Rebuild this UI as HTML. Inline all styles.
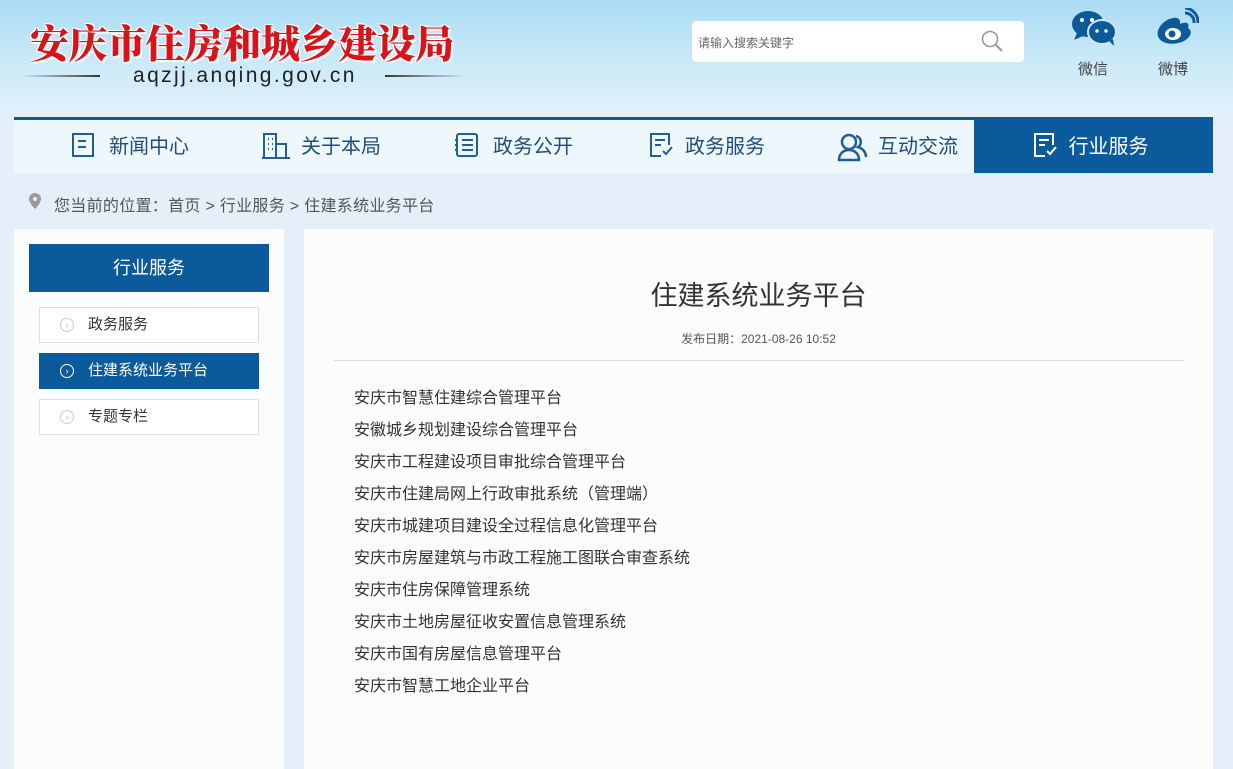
<!DOCTYPE html>
<html><head><meta charset="utf-8"><style>
*{margin:0;padding:0;box-sizing:border-box}
body{width:1233px;height:765px;overflow:hidden;font-family:"Liberation Sans","Noto Sans CJK SC",sans-serif;background:#e4eff9;position:relative;color:#333}
.hdr{position:absolute;left:0;top:0;width:1233px;height:117px;background:linear-gradient(180deg,#a9dcf5 0%,#c9e9f8 50%,#e3f1fa 100%)}
.logo{position:absolute;left:30px;top:14px;font-family:"Noto Serif CJK SC",serif;font-weight:900;font-size:39px;color:#d8141a;letter-spacing:-0.5px;text-shadow:2px 2px 0 #fff,-1px -1px 0 #fff,1px -1px 0 #fff,-1px 1px 0 #fff}
.url{position:absolute;left:133px;top:64px;font-size:21px;letter-spacing:2.4px;color:#222}
.ln{position:absolute;top:75px;height:2px;width:80px}
.search{position:absolute;left:692px;top:21px;width:332px;height:41px;background:#fff;border-radius:4px}
.search span{position:absolute;left:6px;top:13px;font-size:12px;color:#666}
.soc{position:absolute;top:58px;font-size:15px;color:#444}
.nav{position:absolute;left:14px;top:117px;width:1199px;height:56px;background:#edf7fc;border-top:3px solid #0d5a96}
.nav div{position:absolute;top:0;height:53px;line-height:55px;font-size:20px;color:#1f4e79}
.nav .act{left:960px;width:239px;background:#0b5a9b;color:#fff;text-align:center}
.nav svg{position:absolute;top:12px}
.crumb{position:absolute;left:54px;top:192px;font-size:16px;letter-spacing:0.3px;color:#555}
.side{position:absolute;left:14px;top:229px;width:270px;height:540px;background:#fbfcfd}
.sh{position:absolute;left:15px;top:15px;width:240px;height:48px;background:#0b5a9b;color:#fff;font-size:18px;text-align:center;line-height:48px}
.si{position:absolute;left:25px;width:220px;height:36px;border:1px solid #ddd;background:#fff;font-size:15px;line-height:34px;padding-left:48px;color:#333}
.si i{position:absolute;left:20px;top:10px;width:14px;height:14px;border:1px solid #ccc;border-radius:50%;font-style:normal;font-size:9px;line-height:12px;text-align:center;color:#bbb;padding:0}
.si.on{background:#0b5a9b;color:#fff;border-color:#0b5a9b}
.si.on i{border-color:#fff;color:#fff}
.main{position:absolute;left:304px;top:229px;width:909px;height:540px;background:#fcfcfc}
.tt{position:absolute;left:0;width:909px;top:45px;text-align:center;font-size:27px;color:#333}
.dt{position:absolute;left:0;width:909px;top:101px;text-align:center;font-size:12px;color:#555}
.hr{position:absolute;left:30px;top:131px;width:850px;height:1px;background:#ddd}
.list{position:absolute;left:50px;top:154px;font-size:16px;line-height:32px;color:#333}
</style></head><body>
<div class="hdr">
<div class="logo">安庆市住房和城乡建设局</div>
<div class="ln" style="left:20px;background:linear-gradient(90deg,transparent,#333)"></div>
<div class="url">aqzjj.anqing.gov.cn</div>
<div class="ln" style="left:385px;background:linear-gradient(90deg,#333,transparent)"></div>
<div class="search"><span>请输入搜索关键字</span>
<svg style="position:absolute;left:288px;top:8px" width="24" height="24" viewBox="0 0 24 24"><circle cx="10" cy="10" r="7.5" fill="none" stroke="#999" stroke-width="1.6"/><path d="M15.5 15.5L22 22" stroke="#999" stroke-width="2"/></svg></div>
<svg style="position:absolute;left:1071px;top:9px" width="46" height="38" viewBox="0 0 46 38"><ellipse cx="17" cy="15" rx="16" ry="13" fill="#0c5a98"/><path d="M6 24l-3 7 9-4z" fill="#0c5a98"/><ellipse cx="31" cy="23" rx="14" ry="12" fill="#0c5a98" stroke="#cde9f7" stroke-width="2"/><path d="M38 32l5 5-1-7z" fill="#0c5a98"/><circle cx="11" cy="11" r="2" fill="#fff"/><circle cx="21" cy="11" r="2" fill="#fff"/><circle cx="26" cy="22" r="1.7" fill="#fff"/><circle cx="35" cy="22" r="1.7" fill="#fff"/></svg>
<div class="soc" style="left:1078px">微信</div>
<svg style="position:absolute;left:1155px;top:8px" width="44" height="38" viewBox="0 0 44 38"><path d="M18 10C8 12 1 21 3 28c2 8 16 10 26 5 7-4 9-10 4-13 2-5-2-7-8-4 1-5-3-7-7-6z" fill="#0c5a98"/><ellipse cx="18" cy="26" rx="8" ry="6" fill="#fff"/><circle cx="17" cy="26" r="3.5" fill="#0c5a98"/><path d="M30 5a9 9 0 0 1 9 10" stroke="#0c5a98" stroke-width="3" fill="none"/><path d="M30 0a14 14 0 0 1 13 15" stroke="#0c5a98" stroke-width="3" fill="none"/></svg>
<div class="soc" style="left:1158px">微博</div>
</div>
<div class="nav">
<svg style="left:57px" width="26" height="26" viewBox="0 0 26 26" fill="none" stroke="#1f5f95" stroke-width="2"><rect x="2" y="2" width="20" height="22"/><path d="M7 9h8M7 15h8M22 5v19"/></svg>
<div style="left:95px">新闻中心</div>
<svg style="left:248px" width="28" height="28" viewBox="0 0 28 28" fill="none" stroke="#1f5f95" stroke-width="2"><rect x="2" y="2" width="12" height="24"/><path d="M14 12h10v14M0 26h28M6 7h1M10 7h1M6 12h1M10 12h1M6 17h1M10 17h1"/></svg>
<div style="left:287px">关于本局</div>
<svg style="left:440px" width="26" height="26" viewBox="0 0 26 26" fill="none" stroke="#1f5f95" stroke-width="2"><rect x="3" y="2" width="20" height="22" rx="2"/><path d="M8 8h11M8 13h11M8 18h11M1 8h3M1 13h3M1 18h3"/></svg>
<div style="left:479px">政务公开</div>
<svg style="left:634px" width="26" height="26" viewBox="0 0 26 26" fill="none" stroke="#1f5f95" stroke-width="2"><path d="M21 13V2H3v22h10M7 8h10M7 13h6"/><path d="M15 19l3 3 6-7"/></svg>
<div style="left:671px">政务服务</div>
<svg style="left:822px" width="32" height="30" viewBox="0 0 32 30" fill="none" stroke="#1f5f95" stroke-width="2.5"><circle cx="13" cy="10" r="7"/><path d="M3 28c0-6 4-10 10-10s10 4 10 10zM20 4a6 6 0 0 1 2 11c4 1 8 5 8 10"/></svg>
<div style="left:864px">互动交流</div>
<div class="act"><svg style="left:58px" width="26" height="26" viewBox="0 0 26 26" fill="none" stroke="#fff" stroke-width="2"><path d="M21 13V2H3v22h10M7 8h10M7 13h6"/><path d="M15 19l3 3 6-7"/></svg><span style="margin-left:30px">行业服务</span></div>
</div>
<svg style="position:absolute;left:29px;top:193px" width="12" height="16" viewBox="0 0 12 16"><path d="M6 0a6 6 0 0 0-6 6c0 4 6 10 6 10s6-6 6-10a6 6 0 0 0-6-6z" fill="#999"/><circle cx="6" cy="6" r="2" fill="#e4eff9"/></svg>
<div class="crumb">您当前的位置：首页 &gt; 行业服务 &gt; 住建系统业务平台</div>
<div class="side">
<div class="sh">行业服务</div>
<div class="si" style="top:78px"><i>›</i>政务服务</div>
<div class="si on" style="top:124px"><i>›</i>住建系统业务平台</div>
<div class="si" style="top:170px"><i>›</i>专题专栏</div>
</div>
<div class="main">
<div class="tt">住建系统业务平台</div>
<div class="dt">发布日期：2021-08-26 10:52</div>
<div class="hr"></div>
<div class="list">安庆市智慧住建综合管理平台<br>安徽城乡规划建设综合管理平台<br>安庆市工程建设项目审批综合管理平台<br>安庆市住建局网上行政审批系统（管理端）<br>安庆市城建项目建设全过程信息化管理平台<br>安庆市房屋建筑与市政工程施工图联合审查系统<br>安庆市住房保障管理系统<br>安庆市土地房屋征收安置信息管理系统<br>安庆市国有房屋信息管理平台<br>安庆市智慧工地企业平台</div>
</div>
</body></html>
